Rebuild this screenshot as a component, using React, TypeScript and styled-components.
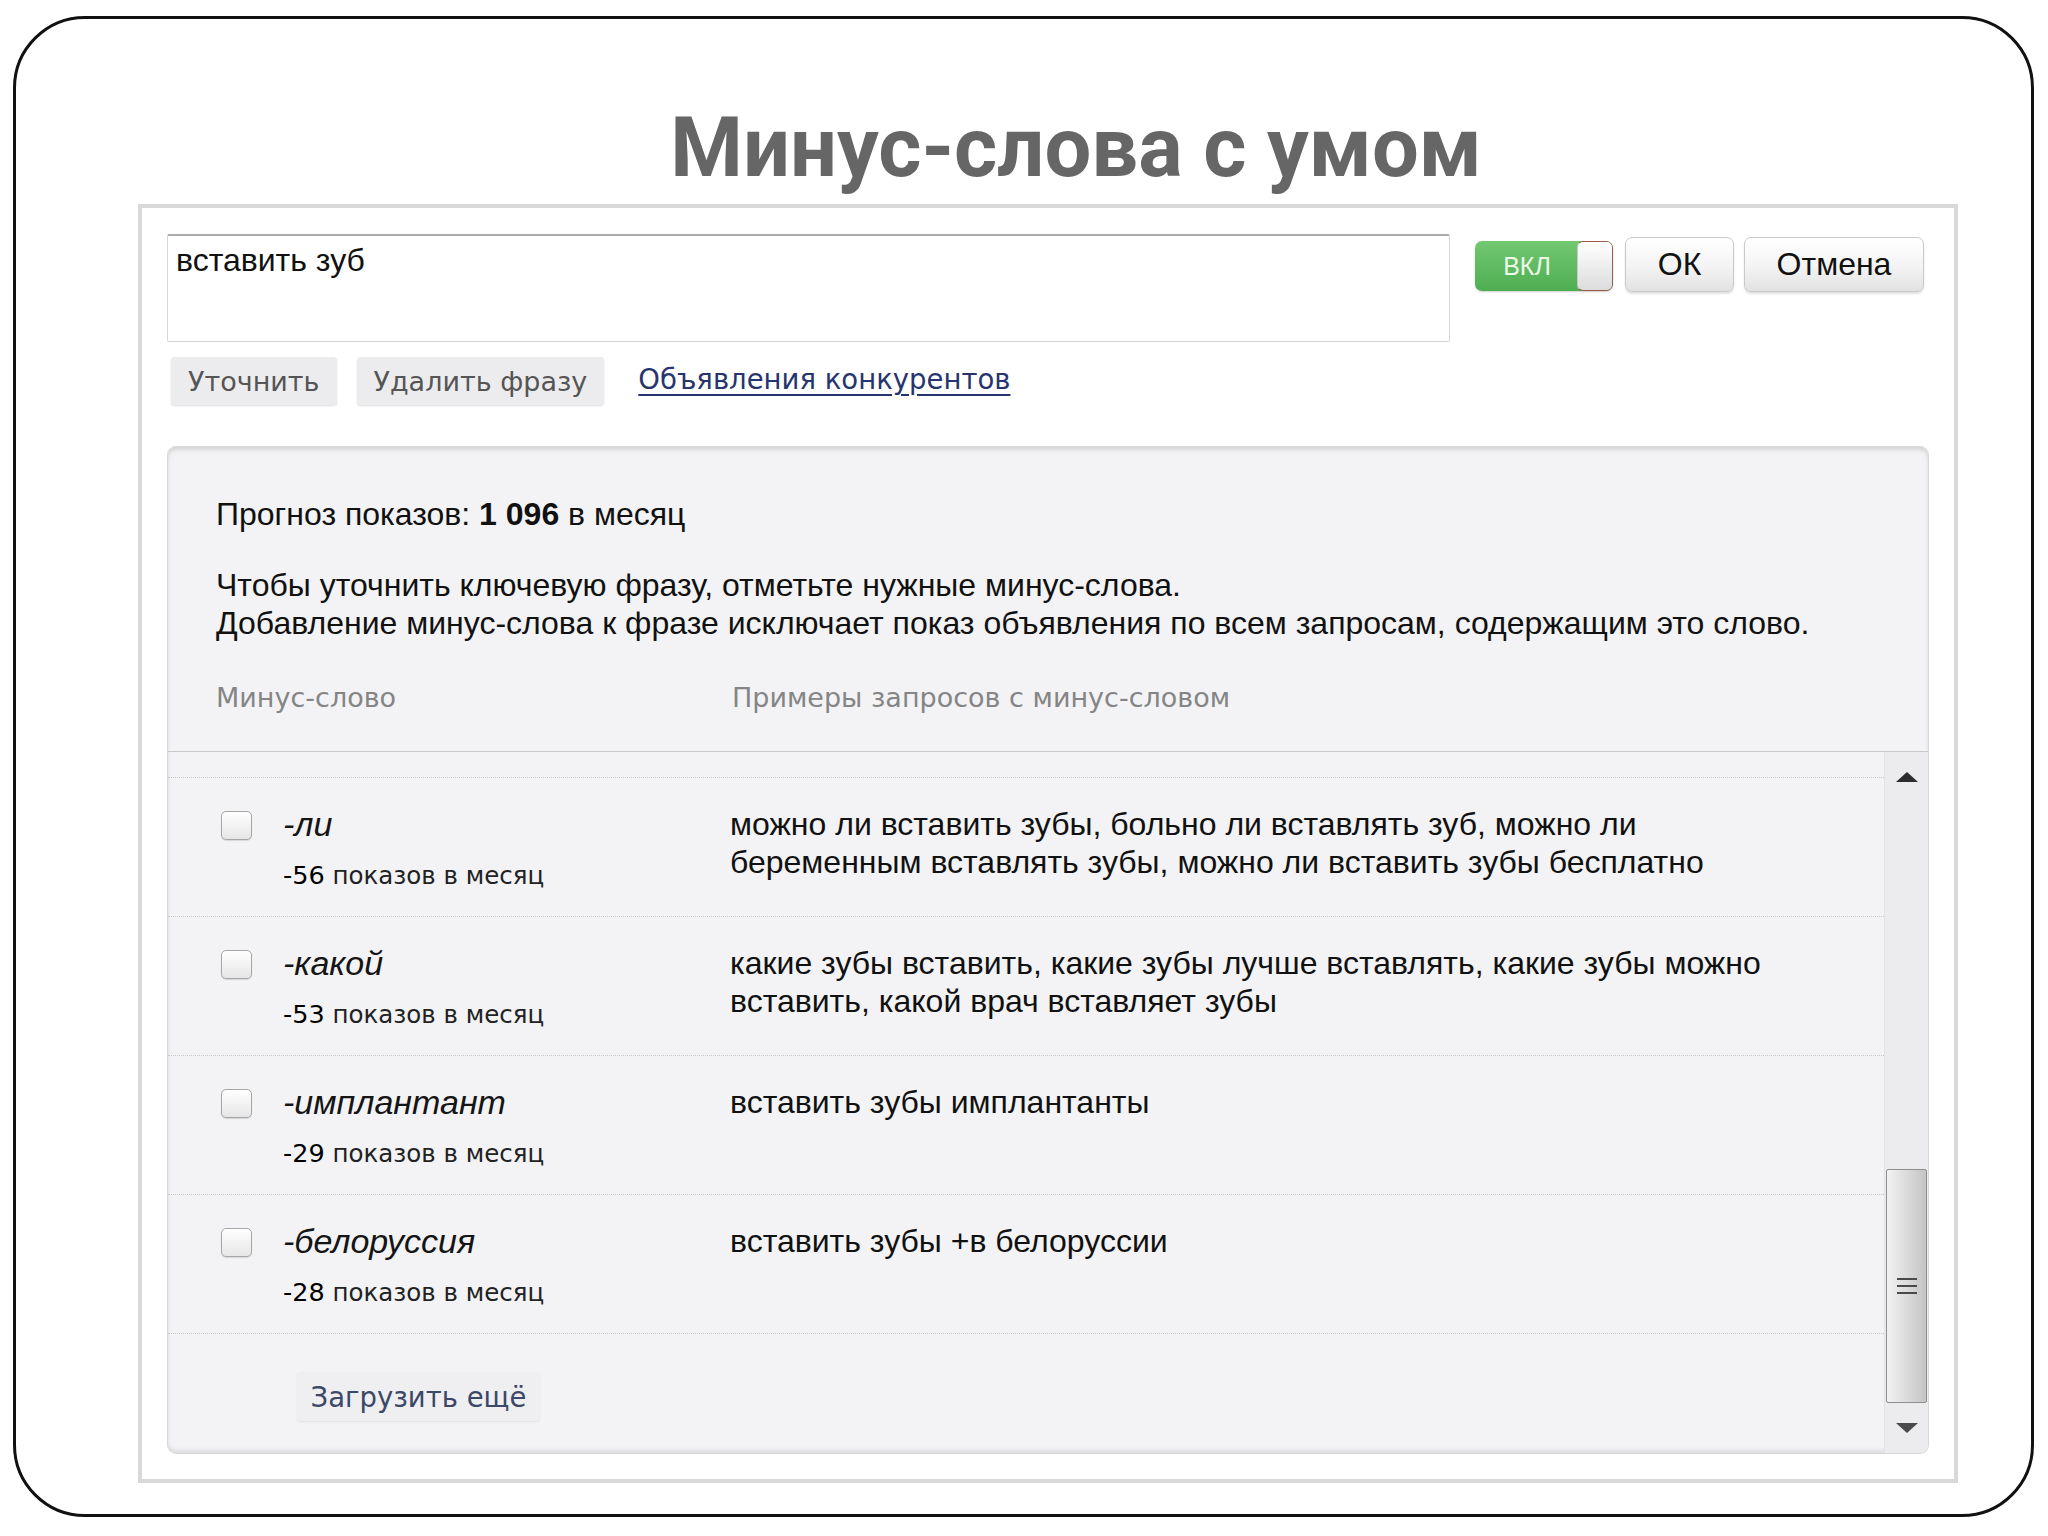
import React from 'react';
import styled, { createGlobalStyle } from 'styled-components';

const GlobalStyle = createGlobalStyle`
  html, body {
    margin: 0;
    padding: 0;
    background: #ffffff;
  }
  * {
    box-sizing: border-box;
  }
`;

const SANS = `"Liberation Sans", Arial, sans-serif`;
const WIDE = `"DejaVu Sans", Verdana, sans-serif`;

interface MinusWord {
  word: string;
  count: number;
  examples: string;
}

const words: MinusWord[] = [
  {
    word: '-ли',
    count: 56,
    examples:
      'можно ли вставить зубы, больно ли вставлять зуб, можно ли беременным вставлять зубы, можно ли вставить зубы бесплатно',
  },
  {
    word: '-какой',
    count: 53,
    examples:
      'какие зубы вставить, какие зубы лучше вставлять, какие зубы можно вставить, какой врач вставляет зубы',
  },
  { word: '-имплантант', count: 29, examples: 'вставить зубы имплантанты' },
  { word: '-белоруссия', count: 28, examples: 'вставить зубы +в белоруссии' },
];

const App: React.FC = () => {
  return (
    <Slide>
      <GlobalStyle />
      <Frame>
        <Title>Минус-слова с умом</Title>
        <Panel>
          <TopRow>
            <PhraseBox>вставить зуб</PhraseBox>
            <Controls>
              <Toggle>
                <ToggleLabel>ВКЛ</ToggleLabel>
                <ToggleKnob />
              </Toggle>
              <DialogButton width={109}>ОК</DialogButton>
              <DialogButton width={180}>Отмена</DialogButton>
            </Controls>
          </TopRow>
          <ActionRow>
            <GrayButton>Уточнить</GrayButton>
            <GrayButton>Удалить фразу</GrayButton>
            <Link>Объявления конкурентов</Link>
          </ActionRow>

          <Box>
            <Info>
              <Forecast>
                Прогноз показов: <b>1 096</b> в месяц
              </Forecast>
              <Hint>
                Чтобы уточнить ключевую фразу, отметьте нужные минус-слова.
                <br />
                Добавление минус-слова к фразе исключает показ объявления по всем запросам, содержащим это слово.
              </Hint>
              <HeadRow>
                <HeadCell>Минус-слово</HeadCell>
                <HeadCell>Примеры запросов с минус-словом</HeadCell>
              </HeadRow>
            </Info>

            <ListArea>
              <ListScroll>
                <List>
                  {words.map((w) => (
                    <Row key={w.word}>
                      <Check />
                      <WordCell>
                        <Word>{w.word}</Word>
                        <Count>
                          <CountNum>-{w.count}</CountNum> показов в месяц
                        </Count>
                      </WordCell>
                      <Examples>{w.examples}</Examples>
                    </Row>
                  ))}
                </List>
                <LoadMoreWrap>
                  <LoadMore>Загрузить ещё</LoadMore>
                </LoadMoreWrap>
              </ListScroll>

              <Scrollbar>
                <ScrollArrow>
                  <svg width="22" height="10" viewBox="0 0 22 10">
                    <polygon points="11,0 22,10 0,10" fill="#2c2c2c" />
                  </svg>
                </ScrollArrow>
                <Track>
                  <Thumb>
                    <Grip />
                    <Grip />
                    <Grip />
                  </Thumb>
                </Track>
                <ScrollArrow>
                  <svg width="22" height="10" viewBox="0 0 22 10">
                    <polygon points="0,0 22,0 11,10" fill="#4a4a4a" />
                  </svg>
                </ScrollArrow>
              </Scrollbar>
            </ListArea>
          </Box>
        </Panel>
      </Frame>
    </Slide>
  );
};

const Slide = styled.div`
  width: 2048px;
  height: 1536px;
  padding: 16px 0 0 13px;
  background: #ffffff;
`;

const Frame = styled.div`
  width: 2021px;
  height: 1501px;
  border: 3px solid #111111;
  border-radius: 72px;
  display: flex;
  flex-direction: column;
  align-items: flex-start;
`;

const Title = styled.h1`
  align-self: stretch;
  margin: 80px 0 0 0;
  padding-left: 105px;
  text-align: center;
  font-family: Roboto, "Open Sans", sans-serif;
  font-weight: 700;
  font-size: 83px;
  line-height: 97px;
  color: #666666;
`;

const Panel = styled.div`
  margin: 8px 0 0 122px;
  width: 1820px;
  height: 1279px;
  border: 4px solid #d9d9d9;
  padding: 26px 25px 25px 25px;
  background: #ffffff;
  display: flex;
  flex-direction: column;
`;

const TopRow = styled.div`
  display: flex;
  align-items: flex-start;
`;

const PhraseBox = styled.div`
  width: 1283px;
  height: 108px;
  background: #ffffff;
  border: 1px solid #d6d6d6;
  border-top: 2px solid #ababab;
  border-radius: 2px;
  padding: 5px 8px;
  font-family: ${SANS};
  font-size: 32px;
  line-height: 38px;
  color: #111111;
`;

const Controls = styled.div`
  display: flex;
  align-items: flex-start;
  margin-left: 25px;
  padding-top: 3px;
`;

const Toggle = styled.div`
  margin-top: 4px;
  width: 138px;
  height: 50px;
  display: flex;
  border-radius: 7px;
  overflow: hidden;
  background: linear-gradient(#72c872, #4fae52);
  box-shadow: 0 1px 2px rgba(0, 0, 0, 0.2);
`;

const ToggleLabel = styled.span`
  flex: 1;
  display: flex;
  align-items: center;
  justify-content: center;
  padding-left: 2px;
  font-family: ${SANS};
  font-size: 25px;
  color: #ecfbe8;
`;

const ToggleKnob = styled.span`
  width: 36px;
  height: 100%;
  background: linear-gradient(#ffffff, #dcdcdc);
  border: 1px solid #9b5a4a;
  border-left-color: #c8c8c8;
  border-radius: 6px;
`;

const DialogButton = styled.button<{ width: number }>`
  margin-left: 12px;
  width: ${(p) => p.width}px;
  height: 55px;
  border: 1px solid #c9c9c9;
  border-radius: 7px;
  background: linear-gradient(#ffffff, #f3f3f3 55%, #e2e2e2);
  box-shadow: 0 2px 2px rgba(0, 0, 0, 0.12);
  font-family: ${SANS};
  font-size: 32px;
  color: #111111;
  padding: 0;
  & + & {
    margin-left: 10px;
  }
`;

const ActionRow = styled.div`
  display: flex;
  align-items: center;
  margin: 15px 0 0 4px;
  height: 48px;
`;

const GrayButton = styled.button`
  height: 48px;
  padding: 0 17px;
  margin-right: 20px;
  border: none;
  border-radius: 4px;
  background: #ececee;
  box-shadow: 0 1px 2px rgba(0, 0, 0, 0.14);
  font-family: ${WIDE};
  font-size: 27px;
  color: #555555;
`;

const Link = styled.a`
  margin-left: 14px;
  margin-top: -4px;
  font-family: ${WIDE};
  font-size: 27.5px;
  color: #27356e;
  text-decoration: underline;
  text-underline-offset: 5px;
  cursor: pointer;
`;

const Box = styled.div`
  margin-top: 41px;
  flex: 1;
  display: flex;
  flex-direction: column;
  border: 1px solid #d8d8d8;
  border-radius: 9px;
  background: #f3f3f5;
  box-shadow: inset 0 4px 5px -2px rgba(0, 0, 0, 0.16), inset 0 -4px 5px -2px rgba(0, 0, 0, 0.12);
  overflow: hidden;
`;

const Info = styled.div`
  padding: 48px 0 0 48px;
  border-bottom: 1px solid #c9c9c9;
`;

const Forecast = styled.div`
  font-family: ${SANS};
  font-size: 32px;
  line-height: 38px;
  color: #111111;
  b {
    font-weight: 700;
  }
`;

const Hint = styled.div`
  margin-top: 33px;
  font-family: ${SANS};
  font-size: 32px;
  line-height: 38px;
  color: #111111;
`;

const HeadRow = styled.div`
  display: grid;
  grid-template-columns: 516px 1fr;
  margin-top: 37px;
  padding-bottom: 34px;
`;

const HeadCell = styled.div`
  font-family: ${WIDE};
  font-size: 27px;
  line-height: 38px;
  color: #858585;
`;

const ListArea = styled.div`
  flex: 1;
  display: flex;
  min-height: 0;
`;

const ListScroll = styled.div`
  flex: 1;
  padding-top: 25px;
  overflow: hidden;
`;

const List = styled.div`
  border-top: 1px dotted #c8c8c8;
`;

const Row = styled.div`
  display: grid;
  grid-template-columns: 62px 447px 1fr;
  align-items: start;
  height: 139px;
  padding: 27px 0 0 53px;
  border-bottom: 1px dotted #c8c8c8;
`;

const Check = styled.span`
  margin-top: 6px;
  width: 31px;
  height: 29px;
  border: 1px solid #a6a6a6;
  border-radius: 5px;
  background: linear-gradient(#ffffff, #e6e6e6);
  box-shadow: 0 1px 1px rgba(0, 0, 0, 0.12);
`;

const WordCell = styled.div`
  display: flex;
  flex-direction: column;
`;

const Word = styled.span`
  font-family: ${SANS};
  font-style: italic;
  font-size: 34px;
  line-height: 38px;
  color: #151515;
`;

const Count = styled.span`
  margin-top: 17px;
  font-family: ${WIDE};
  font-size: 24.5px;
  line-height: 30px;
  color: #222222;
`;

const CountNum = styled.span`
  color: #000000;
  font-size: 25.5px;
`;

const Examples = styled.div`
  max-width: 1065px;
  font-family: ${SANS};
  font-size: 32px;
  line-height: 38px;
  color: #111111;
`;

const LoadMoreWrap = styled.div`
  padding: 38px 0 0 129px;
`;

const LoadMore = styled.button`
  height: 49px;
  width: 243px;
  border: none;
  border-radius: 4px;
  background: #efeff1;
  box-shadow: 0 1px 2px rgba(0, 0, 0, 0.08);
  font-family: ${WIDE};
  font-size: 27.5px;
  color: #3c4868;
  padding: 0;
`;

const Scrollbar = styled.div`
  width: 44px;
  display: flex;
  flex-direction: column;
  background: #ececef;
  border-left: 1px solid #e2e2e6;
`;

const ScrollArrow = styled.div`
  height: 50px;
  display: flex;
  align-items: center;
  justify-content: center;
`;

const Track = styled.div`
  flex: 1;
  display: flex;
  flex-direction: column;
  justify-content: flex-end;
  padding: 0 1px;
`;

const Thumb = styled.div`
  height: 234px;
  border: 1px solid #8e8e8e;
  border-radius: 2px;
  background: linear-gradient(to right, #f2f2f2, #d9d9d9 55%, #c4c4c4);
  display: flex;
  flex-direction: column;
  align-items: center;
  justify-content: center;
  gap: 5px;
`;

const Grip = styled.span`
  width: 20px;
  height: 2px;
  background: #4a4a4a;
`;

export default App;
